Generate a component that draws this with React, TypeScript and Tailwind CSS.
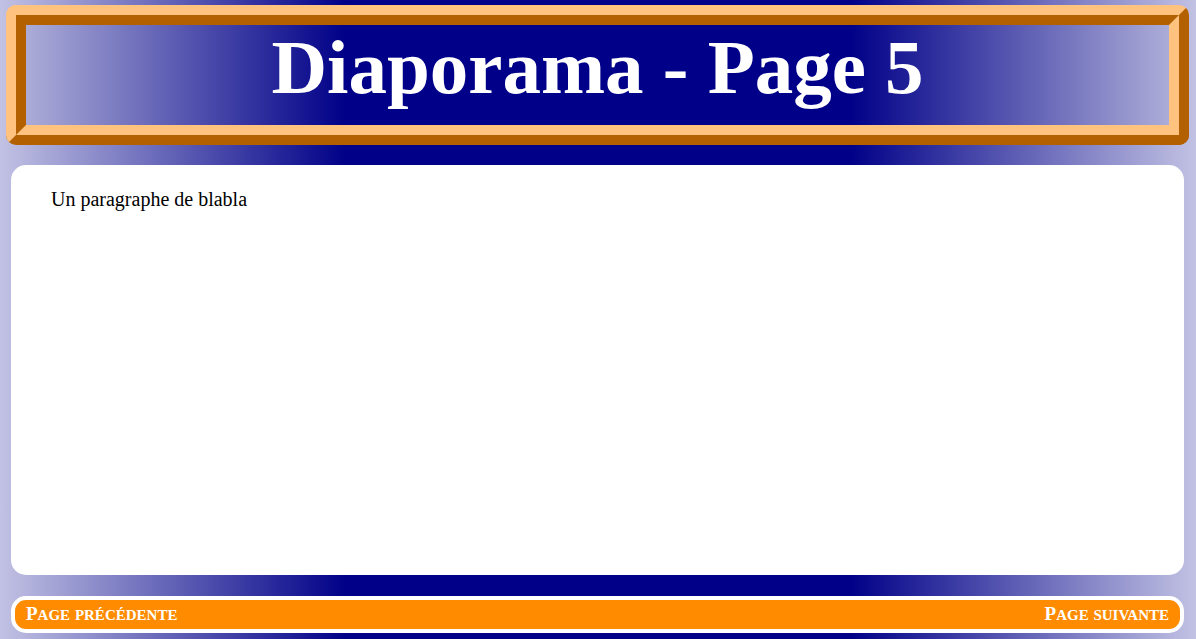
function SmallCaps({ text }: { text: string }) {
  const first = text.charAt(0);
  const rest = text.slice(1);
  return (
    <span className="text-white font-bold leading-[29px] whitespace-nowrap">
      <span className="text-[19px]">{first}</span>
      {rest.split(" ").map((w, i) => (
        <span key={i}>
          {i > 0 && <span className="text-[19px]"> </span>}
          <span className="text-[15px] uppercase">{w}</span>
        </span>
      ))}
    </span>
  );
}

export default function App() {
  return (
    <div
      className="w-[1196px] h-[639px] overflow-hidden flex flex-col bg-[linear-gradient(to_right,#c2c2e4_0%,#000088_29%,#000088_71%,#c2c2e4_100%)]"
      style={{ fontFamily: '"Liberation Serif", "Times New Roman", serif' }}
    >
      <header className="mt-[5px] ml-[6px] mr-[7px] h-[140px] rounded-[10px] border-[10px] border-t-[#ffc37f] border-l-[#ffc37f] border-r-[#b36000] border-b-[#b36000]">
        <div className="h-full border-[10px] border-t-[#b36000] border-l-[#b36000] border-r-[#ffc37f] border-b-[#ffc37f] bg-[linear-gradient(to_right,#acacd8_0%,#000088_28%,#000088_72%,#acacd8_100%)]">
          <h1 className="text-center text-white font-bold text-[77px] leading-none pt-[4px]">
            Diaporama - Page 5
          </h1>
        </div>
      </header>
      <main className="mt-[20px] ml-[11px] mr-[12px] h-[410px] rounded-[15px] bg-white px-[40px] pt-[23px]">
        <p className="text-[20px] leading-[22px] text-black">Un paragraphe de blabla</p>
      </main>
      <footer className="mt-[21px] ml-[11px] mr-[12px] h-[37px] rounded-[15px] border-[4px] border-white bg-[#ff8c00] flex justify-between items-center px-[11px]">
        <SmallCaps text="Page précédente" />
        <SmallCaps text="Page suivante" />
      </footer>
    </div>
  );
}
